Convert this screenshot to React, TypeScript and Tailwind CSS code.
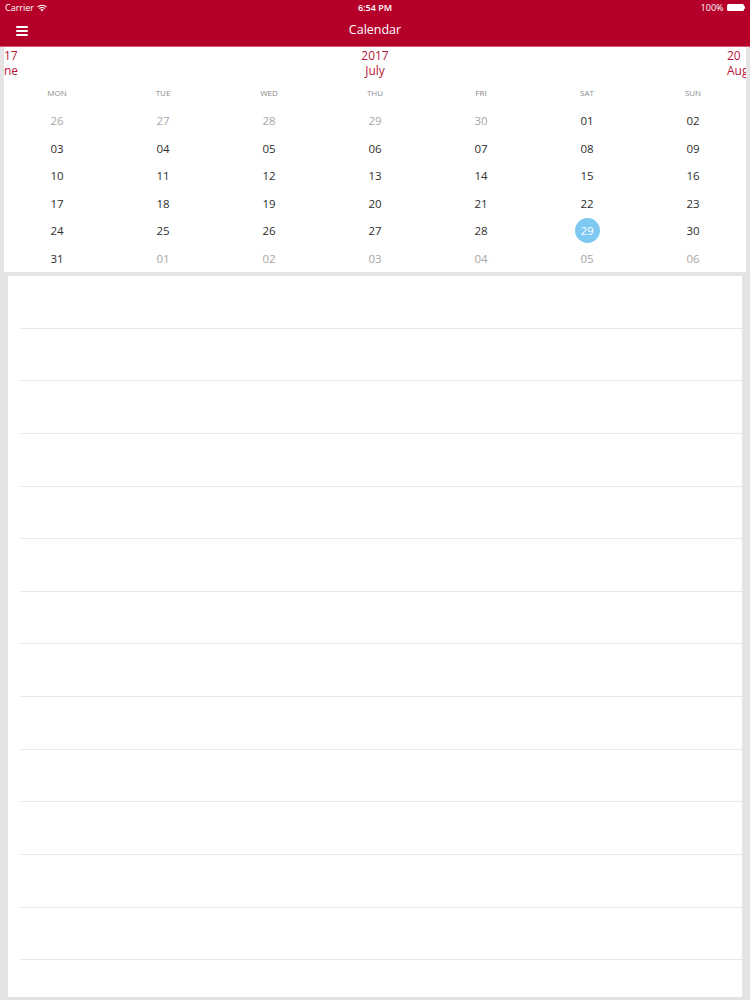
import React from "react";

const WEEKDAYS = ["MON", "TUE", "WED", "THU", "FRI", "SAT", "SUN"];

// [day label, in current month]
const WEEKS: [string, boolean][][] = [
  [["26", false], ["27", false], ["28", false], ["29", false], ["30", false], ["01", true], ["02", true]],
  [["03", true], ["04", true], ["05", true], ["06", true], ["07", true], ["08", true], ["09", true]],
  [["10", true], ["11", true], ["12", true], ["13", true], ["14", true], ["15", true], ["16", true]],
  [["17", true], ["18", true], ["19", true], ["20", true], ["21", true], ["22", true], ["23", true]],
  [["24", true], ["25", true], ["26", true], ["27", true], ["28", true], ["29", true], ["30", true]],
  [["31", true], ["01", false], ["02", false], ["03", false], ["04", false], ["05", false], ["06", false]],
];

const SELECTED = "29";

function StatusBar() {
  return (
    <div className="relative flex h-[15px] items-center justify-between px-[5px] text-[9px] text-white">
      <div className="flex items-center gap-[3px]">
        <span>Carrier</span>
        <svg width="10" height="8" viewBox="0 0 10 8" fill="white">
          <path d="M5 7.5 L3.4 5.7 A2.3 2.3 0 0 1 6.6 5.7 Z" />
          <path d="M1.9 4.2 A4.4 4.4 0 0 1 8.1 4.2 L7.3 5 A3.3 3.3 0 0 0 2.7 5 Z" />
          <path d="M0.3 2.6 A6.6 6.6 0 0 1 9.7 2.6 L8.9 3.4 A5.5 5.5 0 0 0 1.1 3.4 Z" />
        </svg>
      </div>
      <span className="absolute left-1/2 -translate-x-1/2 font-semibold">6:54 PM</span>
      <div className="flex items-center gap-[3px]">
        <span>100%</span>
        <div className="flex items-center">
          <div className="h-[7px] w-[17px] rounded-[1.5px] bg-white" />
          <div className="h-[3px] w-[1.5px] rounded-r-sm bg-white" />
        </div>
      </div>
    </div>
  );
}

function NavBar() {
  return (
    <div className="relative flex h-[32px] items-center justify-center border-b border-[#d6596f]">
      <div className="absolute left-[16px] top-[11px] flex flex-col gap-[2px]">
        <div className="h-[2px] w-[12px] rounded bg-white" />
        <div className="h-[2px] w-[12px] rounded bg-white" />
        <div className="h-[2px] w-[12px] rounded bg-white" />
      </div>
      <span className="text-[12.5px] text-white">Calendar</span>
    </div>
  );
}

function MonthHeader() {
  return (
    <div className="relative h-[34px] text-[12px] leading-[15px] text-[#b8153b]">
      <div className="absolute left-0 top-[1px]">
        <div>17</div>
        <div>ne</div>
      </div>
      <div className="absolute left-1/2 top-[1px] -translate-x-1/2 text-center">
        <div>2017</div>
        <div>July</div>
      </div>
      <div className="absolute right-0 top-[1px] w-[19px] overflow-hidden">
        <div>20</div>
        <div className="whitespace-nowrap">Aug</div>
      </div>
    </div>
  );
}

function CalendarGrid() {
  return (
    <div className="bg-white">
      <MonthHeader />
      <div className="grid grid-cols-7 pt-[6px] pb-[8px]">
        {WEEKDAYS.map((d) => (
          <div key={d} className="text-center text-[8px] text-[#8a8a8a]">
            {d}
          </div>
        ))}
      </div>
      {WEEKS.map((week, wi) => (
        <div key={wi} className="grid h-[27.5px] grid-cols-7">
          {week.map(([label, current], di) => {
            const selected = current && label === SELECTED && wi === 4;
            return (
              <div key={di} className="flex items-center justify-center">
                {selected ? (
                  <div className="flex h-[25px] w-[25px] items-center justify-center rounded-full bg-[#7ec9f1] text-[11.5px] text-white">
                    {label}
                  </div>
                ) : (
                  <span
                    className={
                      current
                        ? "text-[11.5px] text-[#2e2e2e]"
                        : "text-[11.5px] text-[#a6a6a6]"
                    }
                  >
                    {label}
                  </span>
                )}
              </div>
            );
          })}
        </div>
      ))}
    </div>
  );
}

function EventList() {
  const rows = Array.from({ length: 14 });
  return (
    <div className="mx-[8px] mt-[4px] h-[721px] overflow-hidden bg-white">
      {rows.map((_, i) => (
        <div key={i} className="ml-[12px] h-[52.65px] border-b border-[#e9e9e9]" />
      ))}
    </div>
  );
}

export default function App() {
  return (
    <div
      className="h-[1000px] w-[750px] overflow-hidden bg-[#e5e3e5]"
      style={{ fontFamily: '"Open Sans", "Liberation Sans", sans-serif' }}
    >
      <div className="bg-[#b5002a]">
        <StatusBar />
        <NavBar />
      </div>
      <div className="mx-[4px]">
        <CalendarGrid />
      </div>
      <EventList />
    </div>
  );
}
